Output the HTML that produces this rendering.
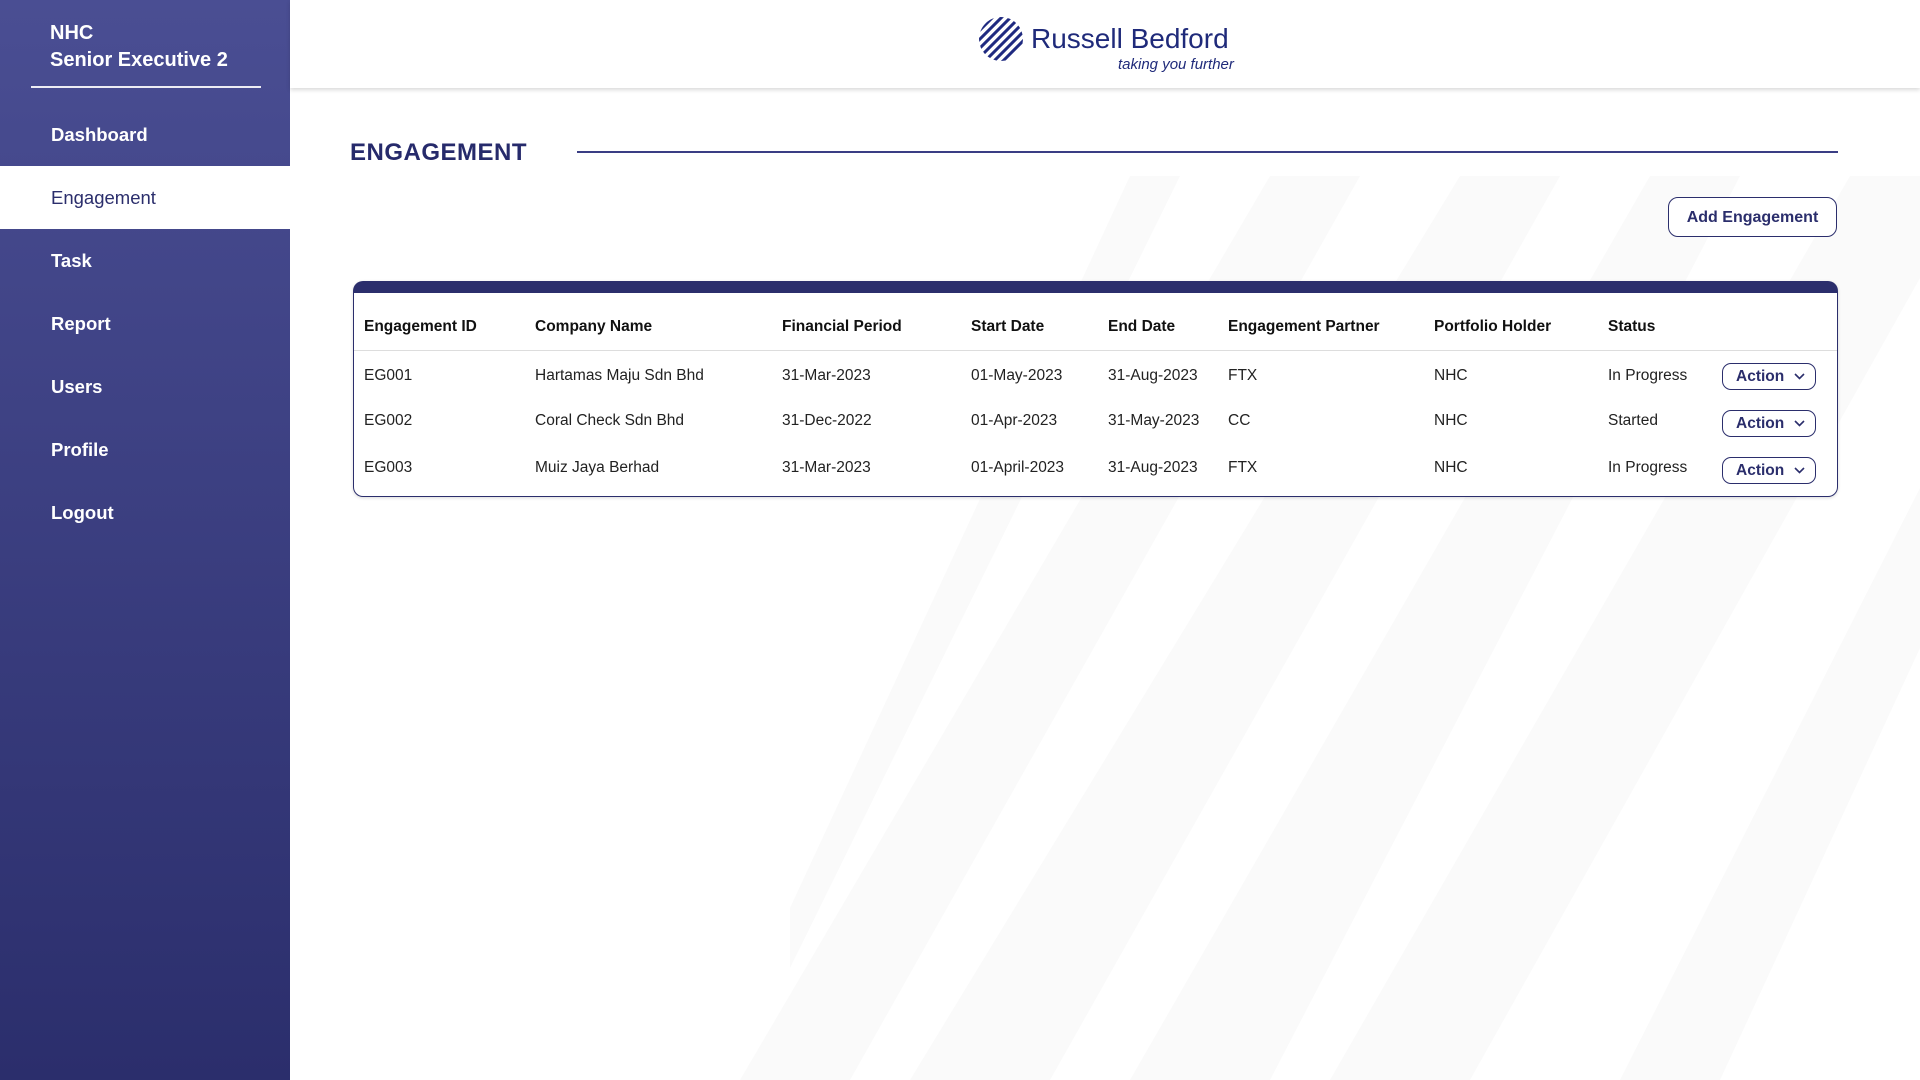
<!DOCTYPE html>
<html><head><meta charset="utf-8"><style>
*{margin:0;padding:0;box-sizing:border-box}
body{width:1920px;height:1080px;overflow:hidden;font-family:"Liberation Sans",sans-serif;background:#fff;position:relative}
.side{position:absolute;left:0;top:0;width:290px;height:1080px;background:linear-gradient(#4a4e93,#2b2e6c)}
.user{position:absolute;left:50px;top:20px;color:#fff;font-size:20px;font-weight:bold;line-height:27px}
.uline{position:absolute;left:31px;top:86px;width:230px;height:2px;background:#fff;opacity:.9}
.nav{position:absolute;left:0;width:290px;height:63px;line-height:63px;padding-left:51px;color:#fff;font-size:18.5px;font-weight:bold}
.nav.act{background:#fff;color:#2b2e6c;font-weight:normal}
.hdr{position:absolute;left:290px;top:0;width:1630px;height:88px;background:#fff;box-shadow:0 2px 4px rgba(0,0,0,.15);z-index:2}
.bg{position:absolute;left:290px;top:88px}
.title{position:absolute;left:350px;top:139px;font-size:24px;font-weight:bold;color:#262a6b;letter-spacing:.5px}
.tline{position:absolute;left:577px;top:151px;width:1261px;height:2px;background:#3a3e84}
.addbtn{position:absolute;left:1668px;top:197px;width:169px;height:40px;border:1px solid #2b2e6c;border-radius:10px;color:#2b2e6c;font-weight:bold;font-size:16px;text-align:center;line-height:40px;background:#fff}
.tbl{position:absolute;left:353px;top:281px;width:1485px;height:216px;border:1px solid #2b2e6c;border-top:12px solid #2b2e6c;border-radius:10px;background:#fff;box-shadow:0 1px 3px rgba(0,0,0,.15)}
.c{position:absolute;font-size:15.5px;color:#222;white-space:nowrap}
.h{font-weight:bold;color:#111}
.sep{position:absolute;left:0;top:57px;width:100%;height:1px;background:#ddd}
.ab{position:absolute;left:1368px;width:94px;height:27px;border:1px solid #2b2e6c;border-radius:9px;color:#2b2e6c;font-weight:bold;font-size:15.5px;line-height:25px;padding-left:13px}
.ab svg{position:absolute;right:10px;top:9px}
</style></head><body>
<div class="side">
<div class="user">NHC<br>Senior Executive 2</div>
<div class="uline"></div>
<div class="nav" style="top:103px">Dashboard</div>
<div class="nav act" style="top:166px">Engagement</div>
<div class="nav" style="top:229px">Task</div>
<div class="nav" style="top:292px">Report</div>
<div class="nav" style="top:355px">Users</div>
<div class="nav" style="top:418px">Profile</div>
<div class="nav" style="top:481px">Logout</div>
</div>
<svg class="bg" width="1630" height="992" viewBox="0 0 1630 992">
<g fill="#fafafa">
<polygon points="500,820 840,88 890,88 500,880"/>
<polygon points="450,992 980,88 1070,88 560,992"/>
<polygon points="620,992 1170,88 1270,88 760,992"/>
<polygon points="840,992 1360,88 1450,88 980,992"/>
<polygon points="1040,992 1560,88 1630,88 1630,190 1180,992"/>
<polygon points="1330,992 1630,400 1630,560 1430,992"/>
</g></svg>
<div class="hdr">
<svg style="position:absolute;left:688px;top:16px" width="46" height="46" viewBox="0 0 46 46">
<defs><clipPath id="cp"><circle cx="23" cy="23" r="22"/></clipPath></defs>
<circle cx="23" cy="23" r="22" fill="#fff"/>
<g clip-path="url(#cp)" stroke="#1f2a80" stroke-width="3">
<line x1="-10" y1="26" x2="26" y2="-10"/><line x1="-8" y1="33" x2="33" y2="-8"/><line x1="-5" y1="39" x2="39" y2="-5"/><line x1="-2" y1="45" x2="45" y2="-2"/><line x1="2" y1="50" x2="50" y2="2"/><line x1="7" y1="54" x2="54" y2="7"/><line x1="12" y1="58" x2="58" y2="12"/>
</g></svg>
<div style="position:absolute;left:741px;top:23px;font-size:28px;color:#1f2a7a">Russell Bedford</div>
<div style="position:absolute;left:828px;top:56px;font-size:15px;font-style:italic;color:#1f2a7a">taking you further</div>
</div>
<div class="title">ENGAGEMENT</div>
<div class="tline"></div>
<div class="addbtn">Add Engagement</div>
<div class="tbl">
<div class="c h" style="left:10px;top:25px">Engagement ID</div>
<div class="c h" style="left:181px;top:25px">Company Name</div>
<div class="c h" style="left:428px;top:25px">Financial Period</div>
<div class="c h" style="left:617px;top:25px">Start Date</div>
<div class="c h" style="left:754px;top:25px">End Date</div>
<div class="c h" style="left:874px;top:25px">Engagement Partner</div>
<div class="c h" style="left:1080px;top:25px">Portfolio Holder</div>
<div class="c h" style="left:1254px;top:25px">Status</div>
<div class="sep"></div>

<div class="c" style="left:10px;top:74px">EG001</div>
<div class="c" style="left:181px;top:74px">Hartamas Maju Sdn Bhd</div>
<div class="c" style="left:428px;top:74px">31-Mar-2023</div>
<div class="c" style="left:617px;top:74px">01-May-2023</div>
<div class="c" style="left:754px;top:74px">31-Aug-2023</div>
<div class="c" style="left:874px;top:74px">FTX</div>
<div class="c" style="left:1080px;top:74px">NHC</div>
<div class="c" style="left:1254px;top:74px">In Progress</div>
<div class="ab" style="top:70px">Action<svg width="11" height="7" viewBox="0 0 11 7"><path d="M1 1l4.5 4.5L10 1" fill="none" stroke="#2b2e6c" stroke-width="1.6"/></svg></div>

<div class="c" style="left:10px;top:119px">EG002</div>
<div class="c" style="left:181px;top:119px">Coral Check Sdn Bhd</div>
<div class="c" style="left:428px;top:119px">31-Dec-2022</div>
<div class="c" style="left:617px;top:119px">01-Apr-2023</div>
<div class="c" style="left:754px;top:119px">31-May-2023</div>
<div class="c" style="left:874px;top:119px">CC</div>
<div class="c" style="left:1080px;top:119px">NHC</div>
<div class="c" style="left:1254px;top:119px">Started</div>
<div class="ab" style="top:117px">Action<svg width="11" height="7" viewBox="0 0 11 7"><path d="M1 1l4.5 4.5L10 1" fill="none" stroke="#2b2e6c" stroke-width="1.6"/></svg></div>

<div class="c" style="left:10px;top:166px">EG003</div>
<div class="c" style="left:181px;top:166px">Muiz Jaya Berhad</div>
<div class="c" style="left:428px;top:166px">31-Mar-2023</div>
<div class="c" style="left:617px;top:166px">01-April-2023</div>
<div class="c" style="left:754px;top:166px">31-Aug-2023</div>
<div class="c" style="left:874px;top:166px">FTX</div>
<div class="c" style="left:1080px;top:166px">NHC</div>
<div class="c" style="left:1254px;top:166px">In Progress</div>
<div class="ab" style="top:164px">Action<svg width="11" height="7" viewBox="0 0 11 7"><path d="M1 1l4.5 4.5L10 1" fill="none" stroke="#2b2e6c" stroke-width="1.6"/></svg></div>
</div>
</body></html>
